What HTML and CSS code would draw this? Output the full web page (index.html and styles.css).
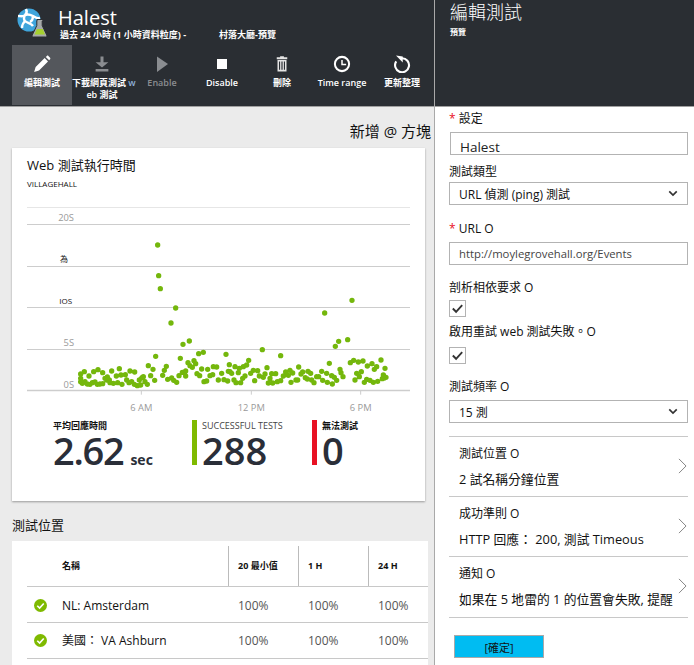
FILE: index.html
```html
<!DOCTYPE html>
<html lang="en">

<head>
  <meta charset="UTF-8">
  <title>Halest</title>
  <link rel="stylesheet" href="styles.css">
</head>

<body>
  <div class="app">
    <div class="main">
      <div class="blade-head">
        <div class="title-row">
          <svg class="logo" viewBox="0 0 30 30">
            <circle cx="12" cy="12" r="11.500" fill="#3fa5dc" />
            <path d="M1 8c3 0 5 1 7-1s2-4 1-6M8 7c3-1 6 0 8 1s4 3 7 2M8 7c-1 2-2 4 0 6s6 2 8 5M8 13c-2 2-3 4-3 7M16 8c0 3-1 5-3 6" fill="none" stroke="#fff" stroke-width="2.400" />
            <path d="M20 11.500h6v1.500h-.8v4.500l4.500 9.500c.4 1-.1 2-1 2H16.300c-.9 0-1.400-1-1-2l4.500-9.500V13H20z" fill="#a7aaa9" stroke="#2a2e33" stroke-width="1" />
            <path d="M20 21h5.800l2.200 5.500H17.500z" fill="#a5d12e" />
          </svg>
          <div class="title-text">
            <div class="blade-title">Halest</div>
            <div class="blade-sub"><span class="sub-a">過去 24 小時 (1 小時資料粒度) -</span><span>村落大廳-預覽</span></div>
          </div>
        </div>
        <div class="toolbar">
          <div class="tool selected">
            <svg viewBox="0 0 24 24"><path d="M1.500 22.500l2-6.500L15.500 4l4.500 4.500L8 20.500zM17 2.500l1.500-1.300c.6-.5 1.400-.5 2 0l2.300 2.300c.5.6.5 1.400 0 2L21.500 7z" fill="#fff" /></svg>
            <span>編輯測試</span>
          </div>
          <div class="tool wide">
            <svg viewBox="0 0 24 24"><path d="M10 2h4v7.500h6.500L12 16.500 3.500 9.500H10zM3.500 18.700h17V22h-17z" fill="#8a8d91" /></svg>
            <span>下載網頁測試 <em>w</em><br>eb 測試</span>
          </div>
          <div class="tool off">
            <svg viewBox="0 0 24 24"><path d="M5.300 2l14.700 10L5.300 22.500z" fill="#8a8d91" /></svg>
            <span>Enable</span>
          </div>
          <div class="tool">
            <svg viewBox="0 0 24 24"><path d="M5.300 5.300h13.400v13.400H5.300z" fill="#fff" /></svg>
            <span>Disable</span>
          </div>
          <div class="tool">
            <svg viewBox="0 0 24 24"><path d="M5 3h14v2.500H5zM9.500 1.500h5V3h-5zM6 6.500h12V22H6zM8 8.500v11h1.500v-11zM11.200 8.500v11h1.600v-11zM14.500 8.500v11H16v-11z" fill="#e4e4e4" fill-rule="evenodd" /></svg>
            <span>刪除</span>
          </div>
          <div class="tool">
            <svg viewBox="0 0 24 24"><circle cx="12" cy="12" r="9.500" fill="none" stroke="#fff" stroke-width="2.700" /><path d="M12 6.500v6h5.500" fill="none" stroke="#fff" stroke-width="2" /></svg>
            <span>Time range</span>
          </div>
          <div class="tool">
            <svg viewBox="0 0 24 24"><path d="M12 4.300A9.300 9.300 0 1 1 4.300 8.500" fill="none" stroke="#fff" stroke-width="2.800" /><path d="M4 0.500l9 1.500v8z" fill="#fff" /></svg>
            <span>更新整理</span>
          </div>
        </div>
      </div>

      <div class="content">
        <div class="add-tile">新增 @ 方塊</div>
        <div class="card">
          <div class="card-title">Web 測試執行時間</div>
          <div class="card-sub">VILLAGEHALL</div>
          <svg class="chart" viewBox="81 150 1149 645">
            <g stroke="#cdcdcd" stroke-width="3">
              <path d="M81 172.500h1149" stroke="#e6e6e6" />
              <path d="M81 223.500h1149M81 349.500h1149M81 472.500h1149M81 598.500h1149" />
              <path d="M81 721.500h1149" stroke-width="4" />
              <path d="M424 722v12M754 722v12M1082 722v12" />
            </g>
            <path class="dots" d="M473 285h0M476 377h0M481 416h0M527 474h0M513 519h0M549 583h0M568 573h0M467 619h0M541 625h0M596 611h0M610 607h0M678 613h0M787 599h0M842 617h0M974 489h0M1056 451h0M1043 569h0M1016 574h0M1006 589h0
            M242 672h0M242 685h0M242 695h0M247 700h0M255 695h0M262 702h0M270 703h0M277 698h0M285 696h0M292 703h0M300 702h0M308 701h0M315 685h0M320 690h0M330 698h0M340 700h0M353 698h0M366 703h0M380 690h0M387 698h0M395 695h0M403 703h0M412 707h0M422 705h0M418 690h0M430 680h0M435 695h0M442 703h0
            M253 665h0M267 678h0M281 665h0M294 659h0M308 668h0M335 663h0M358 656h0M390 663h0M404 666h0M322 681h0M328 690h0M349 678h0M363 675h0M376 674h0M445 647h0M459 658h0M499 649h0M493 661h0M488 676h0M452 677h0M426 683h0M464 691h0M503 688h0M515 684h0M521 691h0M530 697h0M537 677h0M547 667h0M557 663h0M557 678h0M564 638h0M582 632h0M587 641h0M577 652h0M570 647h0M605 657h0M591 671h0M599 677h0M623 658h0M640 650h0M650 651h0M638 674h0M630 677h0M620 693h0M612 695h0M655 690h0
            M665 670h0M672 689h0M683 693h0M688 644h0M685 664h0M690 665h0M695 670h0M705 650h0M718 655h0M730 650h0M740 645h0M746 631h0M715 668h0M728 685h0M735 678h0M702 690h0M708 698h0M722 698h0M752 670h0M760 661h0M773 662h0M764 692h0M778 678h0M790 682h0M795 672h0M801 653h0M805 699h0M810 685h0M818 699h0M815 671h0M827 671h0M832 695h0M842 692h0M850 678h0M857 666h0M865 676h0M870 661h0M878 669h0M873 697h0M888 690h0M893 690h0M896 651h0M903 672h0M908 666h0M916 683h0M924 664h0M922 687h0M932 670h0M935 690h0M942 698h0M950 680h0M956 680h0M965 664h0M968 691h0M980 670h0M982 697h0M995 677h0M997 702h0M1003 682h0M1010 691h0M988 640h0
            M1020 658h0M1023 668h0M1029 680h0M1051 638h0M1061 631h0M1075 636h0M1089 633h0M1102 648h0M1116 641h0M1123 658h0M1130 650h0M1143 630h0M1155 655h0M1150 675h0M1153 684h0M1158 682h0M1147 686h0M1133 694h0M1120 697h0M1110 691h0M1100 688h0M1093 697h0M1065 690h0M1070 670h0M1084 665h0M1078 680h0" />
            <g class="axis">
              <text x="222" y="213" text-anchor="end">20S</text>
              <text x="222" y="588" text-anchor="end">5S</text>
              <text x="222" y="714" text-anchor="end">0S</text>
              <text x="424" y="783" text-anchor="middle">6 AM</text>
              <text x="754" y="783" text-anchor="middle">12 PM</text>
              <text x="1082" y="783" text-anchor="middle">6 PM</text>
            </g>
            <text class="axis-dark" x="180" y="337">為</text>
            <text class="axis-dark" x="178" y="461">IOS</text>
          </svg>
          <div class="stats">
            <div class="stat first">
              <div class="stat-label">平均回應時間</div>
              <div class="stat-value"><span class="tight">2.62</span><small>sec</small></div>
            </div>
            <div class="stat good">
              <div class="stat-label light">SUCCESSFUL TESTS</div>
              <div class="stat-value">288</div>
            </div>
            <div class="stat bad">
              <div class="stat-label">無法測試</div>
              <div class="stat-value">0</div>
            </div>
          </div>
        </div>

        <div class="section-title">測試位置</div>
        <div class="table-wrap">
          <table class="locations">
            <tr>
              <th class="c-icon"></th>
              <th class="c-name">名稱</th>
              <th class="c-num">20 最小值</th>
              <th class="c-num">1 H</th>
              <th class="c-num last">24 H</th>
            </tr>
            <tr class="row-a">
              <td><svg class="ok" viewBox="0 0 12 12"><circle cx="6" cy="6" r="6" fill="#7fba00" /><path d="M3 6.200l2.200 2.200L9 4.200" fill="none" stroke="#fff" stroke-width="1.500" /></svg></td>
              <td>NL: Amsterdam</td>
              <td class="pct">100%</td>
              <td class="pct">100%</td>
              <td class="pct">100%</td>
            </tr>
            <tr>
              <td><svg class="ok" viewBox="0 0 12 12"><circle cx="6" cy="6" r="6" fill="#7fba00" /><path d="M3 6.200l2.200 2.200L9 4.200" fill="none" stroke="#fff" stroke-width="1.500" /></svg></td>
              <td>美國： VA Ashburn</td>
              <td class="pct">100%</td>
              <td class="pct">100%</td>
              <td class="pct">100%</td>
            </tr>
          </table>
        </div>
      </div>
    </div>

    <div class="side">
      <div class="side-head">
        <div class="side-title">編輯測試</div>
        <div class="side-sub">預覽</div>
      </div>
      <div class="form">
        <label class="lbl first"><i>*</i> 設定</label>
        <div class="input name-input">Halest</div>
        <label class="lbl type-lbl">測試類型</label>
        <div class="input select">URL 偵測 (ping) 測試
          <svg viewBox="0 0 12 8"><path d="M1.500 1.500L6 6l4.500-4.500" fill="none" stroke="#333" stroke-width="2" /></svg>
        </div>
        <label class="lbl url-lbl"><i>*</i> URL O</label>
        <div class="input url-input">http://moylegrovehall.org/Events</div>
        <label class="lbl dep-lbl">剖析相依要求 O</label>
        <div class="check"><svg viewBox="0 0 16 16"><path d="M3 8l3.500 3.500L13 4.500" fill="none" stroke="#333" stroke-width="2" /></svg></div>
        <label class="lbl retry-lbl">啟用重試 web 測試失敗。O</label>
        <div class="check"><svg viewBox="0 0 16 16"><path d="M3 8l3.500 3.500L13 4.500" fill="none" stroke="#333" stroke-width="2" /></svg></div>
        <label class="lbl freq-lbl">測試頻率 O</label>
        <div class="input select">15 測
          <svg viewBox="0 0 12 8"><path d="M1.500 1.500L6 6l4.500-4.500" fill="none" stroke="#333" stroke-width="2" /></svg>
        </div>

        <div class="nav-rows">
          <div class="nav-row">
            <div class="nav-head">測試位置 O</div>
            <div class="nav-val">2 試名稱分鐘位置</div>
            <svg viewBox="0 0 10 18"><path d="M1 1l8 8-8 8" fill="none" stroke="#777" stroke-width="1" /></svg>
          </div>
          <div class="nav-row">
            <div class="nav-head">成功準則 O</div>
            <div class="nav-val">HTTP 回應： 200, 測試 Timeous</div>
            <svg viewBox="0 0 10 18"><path d="M1 1l8 8-8 8" fill="none" stroke="#777" stroke-width="1" /></svg>
          </div>
          <div class="nav-row tall">
            <div class="nav-head">通知 O</div>
            <div class="nav-val">如果在 5 地雷的 1 的位置會失敗, 提醒</div>
            <svg viewBox="0 0 10 18"><path d="M1 1l8 8-8 8" fill="none" stroke="#777" stroke-width="1" /></svg>
          </div>
        </div>
        <button class="ok-btn">[確定]</button>
      </div>
    </div>
  </div>
</body>

</html>
```

FILE: styles.css
```css
html,
body {
  margin: 0;
  height: 100%;
}

body {
  font-family: "Open Sans", "Noto Sans CJK TC", sans-serif;
  overflow: hidden;
  color: #111;
}

.app {
  display: flex;
  height: 665px;
  overflow: hidden;
}

.main {
  width: 434px;
  flex: none;
  background: #ebebeb;
  border-right: 1px solid #a9a9a9;
  overflow: hidden;
}

.blade-head {
  height: 106px;
  background: #2a2e33;
  border-bottom: 1px solid #a0a0a0;
  color: #fff;
}

.title-row {
  display: flex;
  height: 45px;
  padding-left: 17px;
  box-sizing: border-box;
}

.logo {
  width: 30px;
  height: 30px;
  margin-top: 8px;
  flex: none;
}

.title-text {
  margin-left: 11px;
}

.blade-title {
  font-size: 20px;
  line-height: 23px;
  margin-top: 6px;
}

.blade-sub {
  font-size: 9px;
  font-weight: 700;
  line-height: 12px;
  white-space: nowrap;
  margin-left: 2px;
}

.sub-a {
  display: inline-block;
  width: 159px;
}

.toolbar {
  display: flex;
  padding-left: 12px;
}

.tool {
  width: 60px;
  height: 60px;
  flex: none;
  text-align: center;
  font-size: 9px;
  font-weight: 600;
  line-height: 12px;
  white-space: nowrap;
}

.tool svg {
  display: block;
  width: 18px;
  height: 18px;
  margin: 10px auto 4px;
}

.tool.selected {
  background: #54575c;
}

.tool.off {
  color: #8a8d91;
}

.tool em {
  font-style: normal;
  color: #8fb0d8;
}

.content {
  padding: 0 0 0 12px;
}

.add-tile {
  font-size: 15px;
  line-height: 20px;
  text-align: right;
  padding: 14px 3px 7px 0;
}

.card {
  width: 413px;
  height: 353px;
  background: #fff;
  box-shadow: 0 1px 2px rgba(0, 0, 0, 0.35);
  padding: 8px 0 0 15px;
  box-sizing: border-box;
}

.card-title {
  font-size: 13px;
  line-height: 18px;
}

.card-sub {
  font-size: 8px;
  line-height: 12px;
  margin-top: 4px;
}

.chart {
  display: block;
  width: 383px;
  height: 215px;
  margin-top: 10px;
}

.dots {
  fill: none;
  stroke: #74b70c;
  stroke-width: 16;
  stroke-linecap: round;
}

.axis text {
  font-size: 28px;
  fill: #9a9a9a;
}

.axis-dark {
  font-size: 24px;
  fill: #111;
}

.stats {
  display: flex;
  margin-left: 26px;
  margin-top: 5px;
}

.stat {
  height: 45px;
  box-sizing: border-box;
}

.stat.first {
  width: 139px;
}

.stat.good {
  width: 120px;
  border-left: 5px solid #7fba00;
  padding-left: 5px;
}

.stat.bad {
  border-left: 5px solid #e81123;
  padding-left: 5px;
}

.stat-label {
  font-size: 9px;
  font-weight: 600;
  line-height: 12px;
}

.stat-label.light {
  font-weight: 400;
  color: #444;
}

.stat-value {
  font-size: 38px;
  line-height: 36px;
  color: #2a2e38;
  font-weight: 600;
  white-space: nowrap;
}

.tight {
  letter-spacing: -1.300px;
}

.stat-value small {
  font-size: 14px;
  font-weight: 700;
  margin-left: 7px;
}

.section-title {
  font-size: 13px;
  line-height: 18px;
  margin-top: 15px;
  height: 25px;
}

.table-wrap {
  width: 416px;
  height: 125px;
  background: #fff;
  padding: 5px 0 0 15px;
  box-sizing: border-box;
}

.locations {
  width: 401px;
  border-collapse: collapse;
  table-layout: fixed;
  font-size: 12px;
}

.locations th {
  height: 40px;
  font-size: 9px;
  font-weight: 700;
  text-align: left;
  border-bottom: 1px solid #c8c8c8;
  padding: 0 0 0 10px;
  box-sizing: border-box;
}

.locations td {
  height: 36px;
  box-sizing: border-box;
  border-bottom: 1px solid #c8c8c8;
  padding: 0;
}

.locations .row-a td {
  padding-top: 3px;
}

.locations th.c-icon {
  width: 35px;
  padding: 0;
}

.locations th.c-name {
  padding-left: 0;
  width: 166px;
}

.locations th.c-num {
  width: 70px;
  box-shadow: inset 1px 0 0 #bbb;
}

.locations th.last {
  width: 60px;
}

.locations td.pct {
  padding-left: 10px;
  color: #555;
}

.ok {
  display: block;
  width: 13px;
  height: 13px;
  margin-left: 7px;
}

.side {
  flex: 1;
  background: #fff;
}

.side-head {
  height: 106px;
  background: #2a2e33;
  border-bottom: 1px solid #a0a0a0;
  color: #fff;
  padding-left: 15px;
}

.side-title {
  font-size: 18px;
  font-weight: 300;
  line-height: 24px;
}

.side-sub {
  font-size: 8px;
  font-weight: 700;
  line-height: 12px;
  margin-top: 2px;
}

.form {
  padding: 0 6px 0 14px;
  font-size: 12px;
}

.lbl {
  display: block;
  line-height: 16px;
}

.lbl i {
  color: #e81123;
  font-style: normal;
}

.lbl.first {
  margin-top: 4px;
}

.input {
  display: flex;
  align-items: center;
  justify-content: space-between;
  height: 23px;
  box-sizing: border-box;
  border: 1px solid #b3b3b3;
  padding: 0 9px;
  font-size: 11.300px;
  white-space: nowrap;
  overflow: hidden;
}

.select {
  font-size: 12px;
}

.select svg {
  width: 10px;
  height: 7px;
  flex: none;
}

.name-input {
  margin: 5px 0 0 1px;
  font-size: 13.500px;
  align-items: flex-start;
  padding-top: 5px;
  color: #222;
}

.type-lbl {
  margin-top: 9px;
  margin-bottom: 2px;
}

.url-lbl {
  margin-top: 16px;
  margin-bottom: 5px;
}

.url-input {
  color: #444;
}

.dep-lbl {
  margin-top: 15px;
  margin-bottom: 4px;
}

.retry-lbl {
  margin-top: 7px;
  margin-bottom: 7px;
}

.freq-lbl {
  margin-top: 15px;
  margin-bottom: 5px;
}

.check {
  width: 17px;
  height: 17px;
  box-sizing: border-box;
  border: 1px solid #b3b3b3;
}

.check svg {
  display: block;
  width: 15px;
  height: 15px;
}

.nav-rows {
  margin-top: 13px;
  border-top: 1px solid #c8c8c8;
}

.nav-row {
  position: relative;
  height: 60px;
  box-sizing: border-box;
  border-bottom: 1px solid #c8c8c8;
  padding: 9px 0 0 10px;
  white-space: nowrap;
}

.nav-row.tall {
  height: 61px;
}

.nav-head {
  line-height: 16px;
}

.nav-val {
  font-size: 12.800px;
  line-height: 16px;
  margin-top: 9px;
}

.nav-row svg {
  position: absolute;
  right: 1px;
  top: 21px;
  width: 9px;
  height: 16px;
}

.ok-btn {
  display: block;
  width: 90px;
  height: 23px;
  margin: 17px 0 0 5px;
  padding: 0;
  background: #00bcf2;
  border: 1px solid #a9a9a9;
  font: inherit;
  font-size: 11px;
  color: #111;
}
```
